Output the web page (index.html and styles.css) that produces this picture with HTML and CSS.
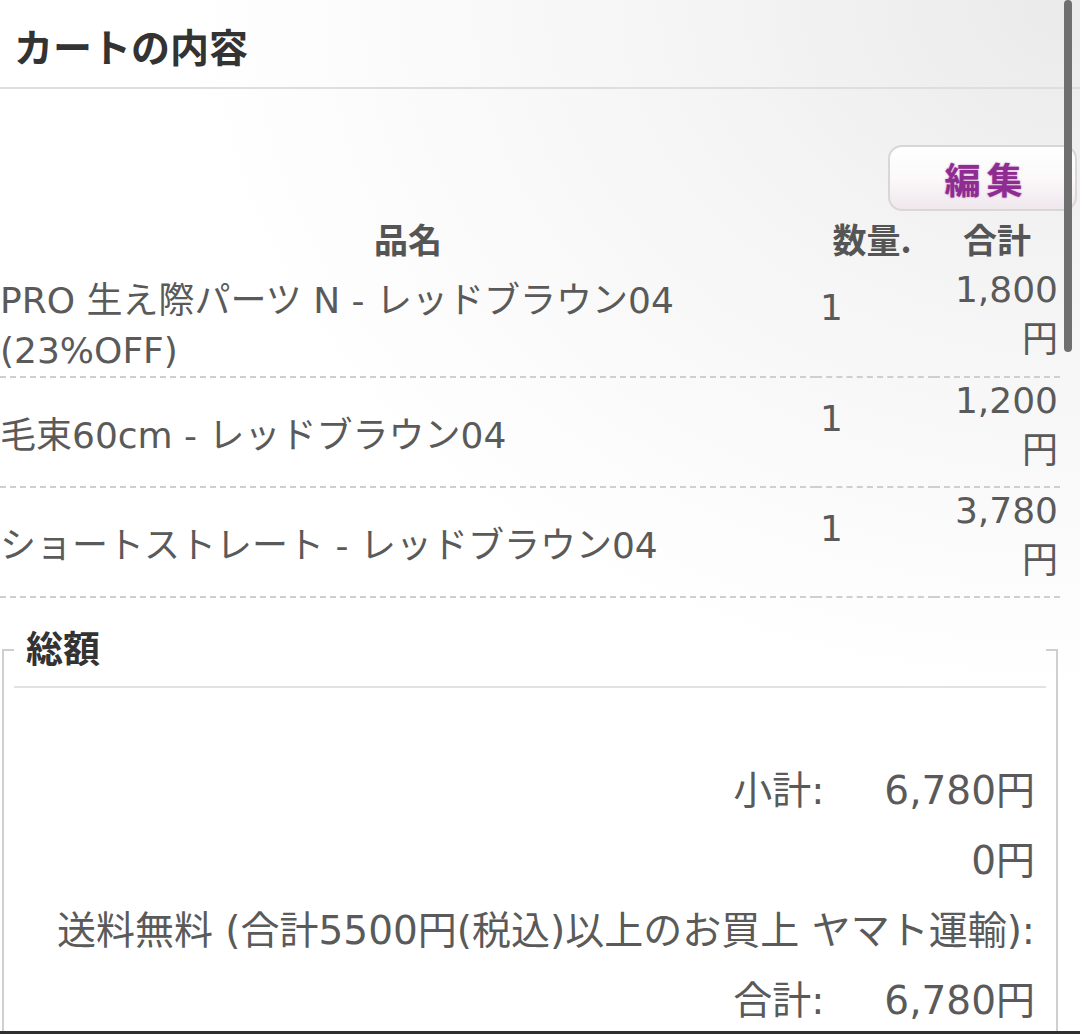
FILE: index.html
```html
<!DOCTYPE html>
<html lang="ja">
<head>
<meta charset="utf-8">
<title>カートの内容</title>
<link rel="stylesheet" href="styles.css">
</head>
<body>
<div class="page">
  <h1 class="title">カートの内容</h1>

  <div class="toolbar">
    <button class="edit-btn" type="button">編集</button>
  </div>

  <table class="cart">
    <colgroup>
      <col class="col-name">
      <col class="col-qty">
      <col class="col-total">
    </colgroup>
    <thead>
      <tr>
        <th>品名</th>
        <th>数量.</th>
        <th>合計</th>
      </tr>
    </thead>
    <tbody>
      <tr>
        <td class="cell-name">PRO 生え際パーツ N - レッドブラウン04<br>(23%OFF)</td>
        <td class="cell-qty"><span class="qty">1</span></td>
        <td class="cell-total"><span class="amt">1,800</span><span class="yen">円</span></td>
      </tr>
      <tr>
        <td class="cell-name">毛束60cm - レッドブラウン04</td>
        <td class="cell-qty"><span class="qty">1</span></td>
        <td class="cell-total"><span class="amt">1,200</span><span class="yen">円</span></td>
      </tr>
      <tr>
        <td class="cell-name">ショートストレート - レッドブラウン04</td>
        <td class="cell-qty"><span class="qty">1</span></td>
        <td class="cell-total"><span class="amt">3,780</span><span class="yen">円</span></td>
      </tr>
    </tbody>
  </table>

  <fieldset class="totals">
    <legend class="totals-legend">総額</legend>
    <div class="sum-list">
      <div class="sum-row"><span class="sum-label">小計:</span><span class="sum-value">6,780円</span></div>
      <div class="sum-row"><span class="sum-value">0円</span></div>
      <div class="sum-row"><span class="sum-label">送料無料 (合計5500円(税込)以上のお買上 ヤマト運輸):</span></div>
      <div class="sum-row"><span class="sum-label">合計:</span><span class="sum-value">6,780円</span></div>
    </div>
  </fieldset>
</div>
<div class="scroll-indicator"></div>
<div class="bottom-edge"></div>
</body>
</html>
```

FILE: styles.css
```css
html, body {
  margin: 0;
  padding: 0;
}

body {
  width: 1080px;
  height: 1034px;
  overflow: hidden;
  font-family: "DejaVu Sans", "Noto Sans CJK JP", sans-serif;
  font-weight: 400;
  color: #5a5a5a;
  background:
    radial-gradient(ellipse 900px 700px at 1080px 0px, #eaeaea 0%, #f5f5f5 45%, #ffffff 100%);
}

.page {
  position: relative;
}

.title {
  margin: 0;
  height: 87px;
  padding: 0 0 0 14px;
  font-family: "Noto Sans CJK JP", sans-serif;
  font-size: 39px;
  font-weight: 700;
  line-height: 90px;
  color: #333;
  border-bottom: 2px solid #dedede;
}

.toolbar {
  display: flex;
  justify-content: flex-end;
  margin-top: 56px;
  padding-right: 3px;
}

.edit-btn {
  width: 189px;
  height: 66px;
  border: 2px solid #d9d6d8;
  border-radius: 14px;
  background: linear-gradient(#ffffff 0%, #fbf9fa 50%, #efe8ed 100%);
  color: #8f2c92;
  font-family: "Noto Sans CJK JP", sans-serif;
  font-size: 36px;
  font-weight: 700;
  letter-spacing: 6px;
  padding: 0 0 0 8px;
  text-shadow: 0 0 2px rgba(143, 44, 146, 0.6);
}

.cart {
  width: 1060px;
  border-collapse: collapse;
  table-layout: fixed;
}

.col-name { width: 816px; }
.col-qty { width: 118px; }
.col-total { width: 126px; }

.cart th {
  height: 56px;
  padding: 0;
  font-family: "Noto Sans CJK JP", sans-serif;
  font-size: 34px;
  font-weight: 700;
  color: #555;
  text-align: center;
  vertical-align: middle;
  line-height: 56px;
}

.cart th:nth-child(2) {
  padding-right: 6px;
}

.cart td {
  box-sizing: border-box;
  height: 110px;
  padding: 0;
  font-size: 36px;
  line-height: 50px;
  border-bottom: 2px dashed #cfcfcf;
}

.cart td.cell-name {
  vertical-align: middle;
  padding-top: 8px;
}

.cell-qty {
  vertical-align: top;
}

.qty {
  display: block;
  padding: 16px 0 0 4px;
}

.cell-total {
  vertical-align: top;
  text-align: right;
}

.amt, .yen {
  display: block;
  padding-right: 2px;
}

.amt {
  line-height: 46px;
}

.yen {
  line-height: 54px;
}

.totals {
  margin: 14px 22px 0 2px;
  padding: 0 10px;
  border: 2px solid #cfcfcf;
  min-height: 500px;
}

.totals-legend {
  width: 100%;
  box-sizing: border-box;
  padding: 10px 12px 14px;
  font-family: "Noto Sans CJK JP", sans-serif;
  font-size: 37px;
  font-weight: 700;
  line-height: 50px;
  color: #333;
  border-bottom: 2px solid #e2e2e2;
}

.sum-list {
  margin-top: 68px;
  padding-right: 11px;
  font-size: 39px;
  line-height: 70px;
}

.sum-row {
  display: flex;
  justify-content: flex-end;
}

.sum-label + .sum-value {
  margin-left: 60px;
}

.scroll-indicator {
  position: absolute;
  top: 0;
  left: 1064px;
  width: 8px;
  height: 352px;
  border-radius: 4px;
  background: #6f6f6f;
}

.bottom-edge {
  position: absolute;
  left: 0;
  top: 1031px;
  width: 1080px;
  height: 3px;
  background: #2e2e2e;
}
```
